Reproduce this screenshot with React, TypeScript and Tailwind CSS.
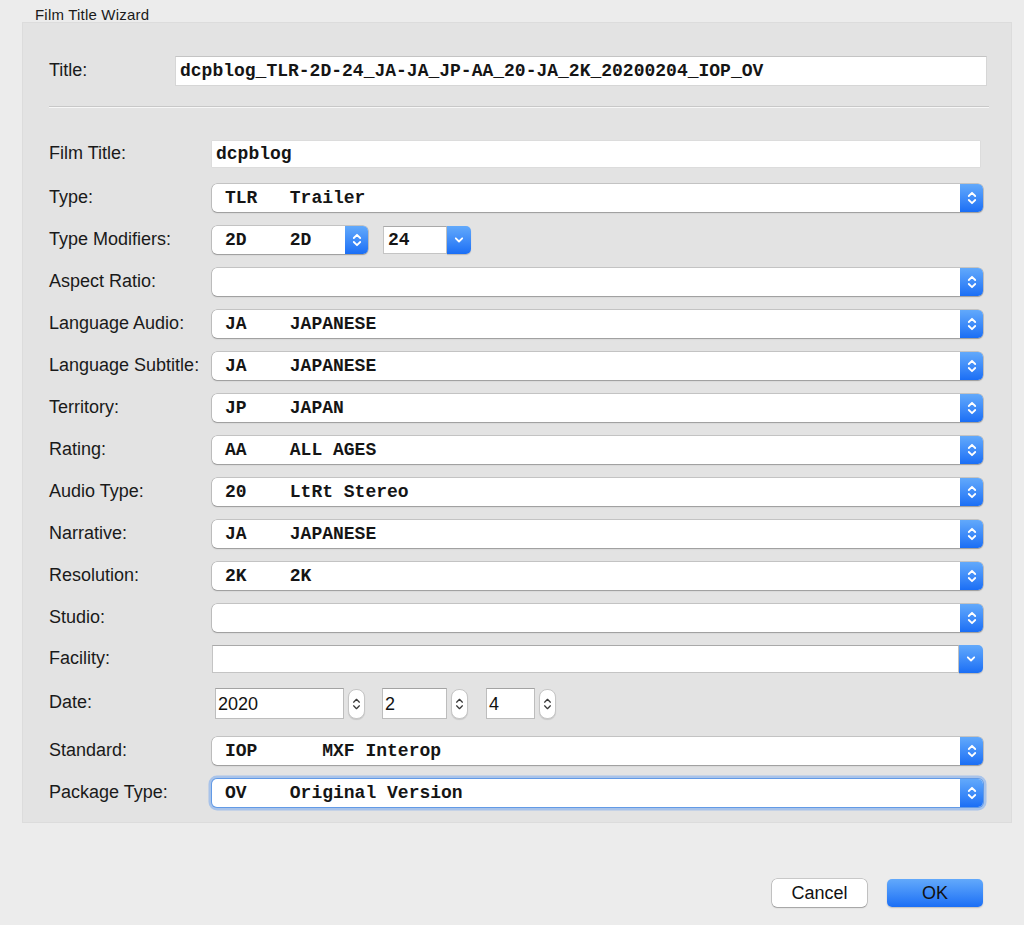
import React from "react";

const mono = "font-['Liberation_Mono',monospace] font-bold text-[18px] text-[#151515]";

function UpDown({ color = "#ffffff", w = 10, h = 16, sw = 1.8 }: { color?: string; w?: number; h?: number; sw?: number }) {
  return (
    <svg width={w} height={h} viewBox="0 0 10 16" fill="none">
      <path d="M1.8 6 L5 2.8 L8.2 6" stroke={color} strokeWidth={sw} strokeLinecap="round" strokeLinejoin="round" />
      <path d="M1.8 10 L5 13.2 L8.2 10" stroke={color} strokeWidth={sw} strokeLinecap="round" strokeLinejoin="round" />
    </svg>
  );
}

function Down() {
  return (
    <svg width="10" height="8" viewBox="0 0 10 8" fill="none">
      <path d="M1.8 2.3 L5 5.5 L8.2 2.3" stroke="#ffffff" strokeWidth="1.8" strokeLinecap="round" strokeLinejoin="round" />
    </svg>
  );
}

function Select({ text, wide = true, focus = false }: { text: string; wide?: boolean; focus?: boolean }) {
  return (
    <div
      className={
        (wide ? "w-[771px] " : "w-[156px] ") +
        (focus
          ? "shadow-[0_0_0_1px_rgba(90,150,230,0.9),0_0_0_3.5px_rgba(120,170,240,0.55)] "
          : "shadow-[0_0_0_0.5px_rgba(0,0,0,0.28),0_1px_1.5px_rgba(0,0,0,0.22)] ") +
        "flex h-[28px] rounded-[5px] bg-white"
      }
    >
      <div className="flex flex-1 items-center pl-[13px]">
        <span className={mono + " whitespace-pre leading-none"}>{text}</span>
      </div>
      <div className="flex h-full w-[23px] items-center justify-center rounded-r-[5px] bg-gradient-to-b from-[#62a9fb] to-[#1a6ef5]">
        <UpDown />
      </div>
    </div>
  );
}

function Combo({ text, w }: { text: string; w: string }) {
  return (
    <div className={w + " flex h-[28px]"}>
      <div className="flex flex-1 items-center border border-[#c4c4c4] border-t-[#a9a9a9] bg-white pl-[4px]">
        <span className={mono + " whitespace-pre leading-none"}>{text}</span>
      </div>
      <div className="flex h-full w-[24px] items-center justify-center rounded-r-[5px] bg-gradient-to-b from-[#62a9fb] to-[#1a6ef5] shadow-[0_1px_1px_rgba(0,0,0,0.2)]">
        <Down />
      </div>
    </div>
  );
}

function Stepper() {
  return (
    <div className="ml-[4px] flex h-[30px] w-[17px] items-center justify-center rounded-[8px] border border-[#c6c6c6] bg-white shadow-[0_1px_1px_rgba(0,0,0,0.12)]">
      <UpDown color="#3a3a3a" w={9} h={18} sw={1.4} />
    </div>
  );
}

function DateField({ value, w }: { value: string; w: string }) {
  return (
    <div className={w + " flex h-[31px] items-center border border-[#bdbdbd] border-t-[#a3a3a3] bg-white pl-[2px]"}>
      <span className="text-[18px] leading-none text-[#111]">{value}</span>
    </div>
  );
}

function Row({ label, children, mt }: { label: string; children: React.ReactNode; mt: string }) {
  return (
    <div className={mt + " flex items-center"}>
      <div className="w-[163px] pb-[3px] text-[18px] leading-none text-[#1a1a1a]">{label}</div>
      {children}
    </div>
  );
}

export default function App() {
  const rows: [string, string][] = [
    ["Type:", "TLR   Trailer"],
    ["Type Modifiers:", ""],
    ["Aspect Ratio:", ""],
    ["Language Audio:", "JA    JAPANESE"],
    ["Language Subtitle:", "JA    JAPANESE"],
    ["Territory:", "JP    JAPAN"],
    ["Rating:", "AA    ALL AGES"],
    ["Audio Type:", "20    LtRt Stereo"],
    ["Narrative:", "JA    JAPANESE"],
    ["Resolution:", "2K    2K"],
    ["Studio:", ""],
  ];
  return (
    <div className="h-[925px] w-[1024px] overflow-hidden bg-[#ececec] font-['Liberation_Sans',Arial,sans-serif]">
      <div className="h-[22px] pl-[35px] pt-[7px] text-[15px] leading-[16px] tracking-[0.2px] text-[#1a1a1a]">
        Film Title Wizard
      </div>
      <div className="ml-[22px] h-[801px] w-[990px] border border-[#dcdcdc] bg-[#e3e3e3] pl-[26px]">
        <div className="mt-[33px] flex items-center">
          <div className="w-[126px] pb-[3px] text-[18px] leading-none text-[#1a1a1a]">Title:</div>
          <div className="flex h-[30px] w-[812px] items-center border border-[#d6d6d6] border-t-[#c4c4c4] bg-white pl-[4px]">
            <span className={mono + " leading-none"}>dcpblog_TLR-2D-24_JA-JA_JP-AA_20-JA_2K_20200204_IOP_OV</span>
          </div>
        </div>
        <div className="mt-[20px] w-[940px] border-t border-b border-t-[#c8c8c8] border-b-[#f7f7f7]" />
        <Row label="Film Title:" mt="mt-[33px]">
          <div className="flex h-[26px] w-[768px] items-center bg-white pl-[4px] shadow-[0_0_0_0.5px_rgba(0,0,0,0.06)]">
            <span className={mono + " leading-none"}>dcpblog</span>
          </div>
        </Row>
        {rows.map(([label, text], i) => (
          <Row key={label} label={label} mt={i === 0 ? "mt-[17px]" : "mt-[14px]"}>
            {label === "Type Modifiers:" ? (
              <div className="flex items-center gap-[15px]">
                <Select text="2D    2D" wide={false} />
                <Combo text="24" w="w-[88px]" />
              </div>
            ) : (
              <Select text={text} />
            )}
          </Row>
        ))}
        <Row label="Facility:" mt="mt-[13px]">
          <Combo text="" w="w-[771px]" />
        </Row>
        <Row label="Date:" mt="mt-[15px]">
          <div className="ml-[3px] flex items-center">
            <DateField value="2020" w="w-[129px]" />
            <Stepper />
            <div className="w-[17px]" />
            <DateField value="2" w="w-[65px]" />
            <Stepper />
            <div className="w-[18px]" />
            <DateField value="4" w="w-[49px]" />
            <Stepper />
          </div>
        </Row>
        <Row label="Standard:" mt="mt-[18px]">
          <Select text="IOP      MXF Interop" />
        </Row>
        <Row label="Package Type:" mt="mt-[14px]">
          <Select text="OV    Original Version" focus />
        </Row>
      </div>
      <div className="mt-[56px] flex justify-end gap-[20px] pr-[41px]">
        <button className="flex h-[28px] w-[95px] items-center justify-center rounded-[5px] bg-white text-[18px] leading-none text-[#111] shadow-[0_0_0_0.5px_rgba(0,0,0,0.3),0_1px_1.5px_rgba(0,0,0,0.2)]">
          Cancel
        </button>
        <button className="flex h-[28px] w-[96px] items-center justify-center rounded-[5px] bg-gradient-to-b from-[#62a9fb] to-[#1a6ef5] text-[18px] leading-none text-[#111] shadow-[0_1px_1.5px_rgba(0,0,0,0.2)]">
          OK
        </button>
      </div>
    </div>
  );
}
